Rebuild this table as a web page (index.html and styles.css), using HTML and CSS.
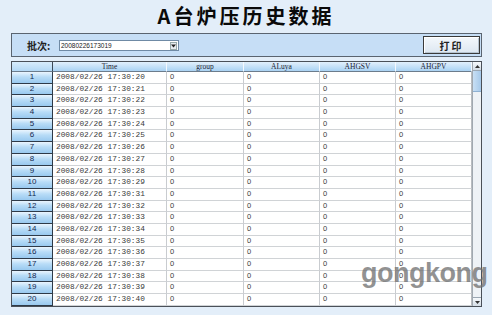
FILE: index.html
```html
<!DOCTYPE html>
<html>
<head>
<meta charset="utf-8">
<link rel="stylesheet" href="styles.css">
</head>
<body>
<div class="page">
  <h1 class="title">A台炉压历史数据</h1>
  <div class="toolbar">
    <span class="label">批次:</span>
    <div class="select"><span class="sel-text">20080226173019</span><span class="sel-btn"><svg width="5" height="4" viewBox="0 0 5 4"><path d="M0 0.5h5L2.5 3.5z" fill="#222"/></svg></span></div>
    <div class="spacer"></div>
    <button class="btn">打印</button>
  </div>
  <div class="table">
    <div class="grid" id="grid">
      <div class="hcell corner"></div>
      <div class="hcell">Time</div>
      <div class="hcell">group</div>
      <div class="hcell">ALuya</div>
      <div class="hcell">AHGSV</div>
      <div class="hcell">AHGPV</div>
    </div>
    <div class="scrollbar">
      <div class="sb-btn up"><svg width="5" height="3" viewBox="0 0 5 3"><path d="M0 3h5L2.5 0z" fill="#333"/></svg></div>
      <div class="sb-thumb"></div>
      <div class="sb-track"></div>
      <div class="sb-btn down"><svg width="5" height="3" viewBox="0 0 5 3"><path d="M0 0h5L2.5 3z" fill="#333"/></svg></div>
    </div>
  </div>
  <div class="watermark">gongkong</div>
</div>
<script>
  var g = document.getElementById('grid');
  var html = '';
  for (var i = 1; i <= 20; i++) {
    var s = i <= 10 ? 19 + i : 20 + i;
    html += '<div class="rh">' + i + '</div>' +
      '<div class="cell time">2008/02/26 17:30:' + s + '</div>' +
      '<div class="cell">0</div><div class="cell">0</div><div class="cell">0</div><div class="cell last">0</div>';
  }
  g.insertAdjacentHTML('beforeend', html);
</script>
</body>
</html>
```

FILE: styles.css
```css
html, body {
  margin: 0;
  padding: 0;
  background: #e3eef9;
}
.page {
  position: relative;
  width: 492px;
  height: 315px;
  overflow: hidden;
  font-family: "Liberation Sans", "Noto Sans CJK SC", sans-serif;
}
.title {
  margin: 0;
  height: 33px;
  padding-top: 4px;
  box-sizing: border-box;
  text-align: center;
  font-family: "Noto Sans CJK SC", sans-serif;
  font-weight: 700;
  font-size: 20px;
  line-height: 24px;
  letter-spacing: 3px;
  color: #0a0a0a;
}
.toolbar {
  margin: 0 10px 0 11px;
  height: 24px;
  box-sizing: border-box;
  border: 1px solid #5a6470;
  background: #c6def6;
  display: flex;
  align-items: center;
  padding-left: 15px;
  padding-right: 1px;
}
.label {
  font-family: "Noto Sans CJK SC", sans-serif;
  font-weight: 700;
  font-size: 10px;
  color: #222;
  width: 32px;
}
.select {
  width: 120px;
  height: 11px;
  box-sizing: border-box;
  border: 1px solid #6f8aa5;
  background: #fff;
  display: flex;
  align-items: center;
  margin-top: 1px;
}
.sel-text {
  flex: 1;
  font-size: 6.5px;
  color: #222;
  padding-left: 1px;
}
.sel-btn {
  width: 7px;
  height: 8px;
  margin-right: 1px;
  background: #e8ecf0;
  border: 1px solid #9aa;
  box-sizing: border-box;
  display: flex;
  align-items: center;
  justify-content: center;
}
.spacer { flex: 1; }
.btn {
  width: 57px;
  height: 18px;
  margin: 0;
  padding: 0;
  border: 1px solid #3a3a3a;
  box-shadow: inset 1px 1px 0 #fff, inset -1px -1px 0 #b7c4d0;
  background: linear-gradient(#f4f8fc, #dde7f1);
  font-family: "Noto Sans CJK SC", sans-serif;
  font-weight: 700;
  font-size: 10px;
  letter-spacing: 2px;
  color: #222;
}
.table {
  margin: 4px 10px 0 11px;
  height: 246px;
  box-sizing: border-box;
  border: 1px solid #4a5058;
  background: #fff;
  display: flex;
}
.grid {
  flex: 1;
  display: grid;
  grid-template-columns: 41px 114px 77px 76px 76px 76px;
  grid-template-rows: 10px repeat(20, 11.7px);
  font-family: "Liberation Mono", monospace;
  font-size: 7.8px;
}
.hcell {
  background: linear-gradient(#e2f0fc, #a9d2f3);
  border-right: 1px solid #f4f9fe;
  border-bottom: 1px solid #6c7c8c;
  box-sizing: border-box;
  text-align: center;
  line-height: 9px;
  font-family: "Liberation Serif", serif;
  font-size: 7.5px;
  color: #223;
}
.hcell.corner {
  background: linear-gradient(#d8ecfb, #b3d8f5);
  border-right: 1px solid #3c4a58;
}
.rh {
  background: linear-gradient(#eaf5fe 0%, #b8dcf7 45%, #99c9ef 100%);
  border-right: 1px solid #2e3a48;
  border-bottom: 1px solid #2e3a48;
  box-sizing: border-box;
  text-align: center;
  font-family: "Liberation Sans", sans-serif;
  font-size: 8px;
  line-height: 10.5px;
  color: #14284f;
}
.cell {
  border-right: 1px solid #c9ccd0;
  border-bottom: 1px solid #d0d3d6;
  box-sizing: border-box;
  padding-left: 3px;
  line-height: 10.5px;
  color: #3a3a3a;
  font-family: "Liberation Sans", sans-serif;
  font-size: 7.5px;
  white-space: nowrap;
  overflow: hidden;
}
.cell.time {
  font-family: "Liberation Mono", monospace;
  font-size: 7.8px;
}
.cell.last {
  border-right: 1px solid #b8bcc0;
}
.scrollbar {
  width: 9px;
  display: flex;
  flex-direction: column;
  background: #eef2f6;
  border-left: 1px solid #a0a8b0;
}
.sb-btn {
  height: 8px;
  background: linear-gradient(#f6f9fc, #d4dde6);
  border-bottom: 1px solid #9aa6b2;
  display: flex;
  align-items: center;
  justify-content: center;
}
.sb-btn.down {
  border-bottom: none;
  border-top: 1px solid #9aa6b2;
}
.sb-thumb {
  height: 20px;
  background: linear-gradient(90deg, #c8dff4, #a6c9ea);
  border-bottom: 1px solid #8fb1d2;
}
.sb-track { flex: 1; }
.watermark {
  position: absolute;
  left: 361px;
  top: 258px;
  font-family: "Liberation Sans", sans-serif;
  font-weight: 700;
  font-size: 27px;
  letter-spacing: -0.5px;
  color: rgba(110, 110, 110, 0.75);
}
```
